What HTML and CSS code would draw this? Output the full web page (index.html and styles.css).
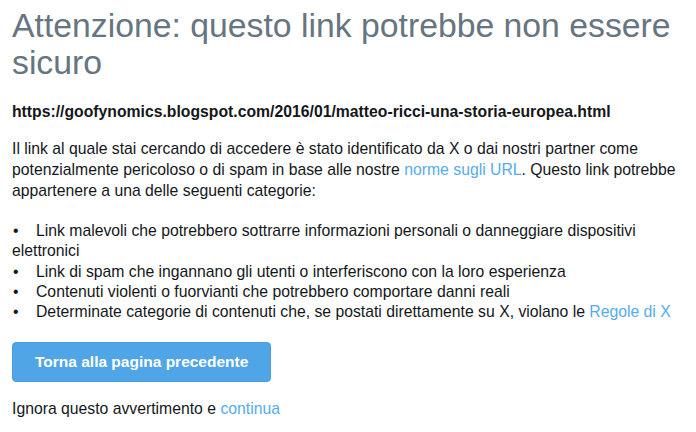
FILE: index.html
```html
<!doctype html>
<html lang="it">

<head>
    <meta charset="UTF-8" />
    <meta name="viewport" content="width=device-width, initial-scale=1.0" />
    <title>Attenzione</title>
    <link rel="stylesheet" href="styles.css">
</head>

<body>
    <div class="warning">
        <h1>Attenzione: questo link potrebbe non essere sicuro</h1>
        <p class="url">https://goofynomics.blogspot.com/2016/01/matteo-ricci-una-storia-europea.html</p>
        <p>Il link al quale stai cercando di accedere è stato identificato da X o dai nostri partner come
            potenzialmente pericoloso o di spam in base alle nostre <a href="#">norme sugli URL</a>. Questo link potrebbe
            appartenere a una delle seguenti categorie:</p>
        <ul class="categories">
            <li>Link malevoli che potrebbero sottrarre informazioni personali o danneggiare dispositivi elettronici</li>
            <li>Link di spam che ingannano gli utenti o interferiscono con la loro esperienza</li>
            <li>Contenuti violenti o fuorvianti che potrebbero comportare danni reali</li>
            <li>Determinate categorie di contenuti che, se postati direttamente su X, violano le <a href="#">Regole di X</a></li>
        </ul>
        <button type="button" class="back">Torna alla pagina precedente</button>
        <p class="ignore">Ignora questo avvertimento e <a href="#">continua</a></p>
    </div>
</body>

</html>
```

FILE: styles.css
```css
body {
    font-family: "Liberation Sans", Arial, sans-serif;
    margin: 0;
    padding: 7px 12px;
    color: #14171a;
    background: #fff;
}

.warning {
    max-width: 672px;
}

.warning h1 {
    font-size: 33.75px;
    font-weight: normal;
    line-height: 37px;
    color: #66757f;
    margin: 0 0 20px;
}

.warning p {
    font-size: 15.75px;
    line-height: 21px;
    margin: 0 0 20px;
}

.warning .url {
    font-weight: bold;
    margin-bottom: 16px;
}

.warning a {
    color: #55acee;
    text-decoration: none;
}

.categories {
    list-style: none;
    padding: 0;
    margin: 0 0 20px;
    font-size: 15.75px;
    line-height: 20.3px;
}

.categories li::before {
    content: "•";
    display: inline-block;
    width: 23px;
    padding-left: 1px;
}

.back {
    font-family: inherit;
    font-size: 15.5px;
    font-weight: bold;
    color: #fff;
    background: #50a5e6;
    border: 1px solid #4a9fe0;
    border-radius: 4px;
    padding: 10px 22px;
    height: 40px;
    cursor: pointer;
    margin-bottom: 16px;
}

.warning .ignore {
    margin: 0;
}
```
